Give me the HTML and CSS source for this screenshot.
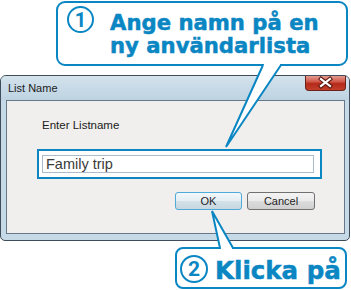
FILE: index.html
```html
<!DOCTYPE html>
<html>
<head>
<meta charset="utf-8">
<link rel="stylesheet" href="styles.css">
</head>
<body>
<div class="page">
  <div class="callout callout-top">
    <span class="num num-top">1</span>
    <div class="callout-text text-top">
      <div class="line">Ange namn på en</div>
      <div class="line">ny användarlista</div>
    </div>
  </div>

  <div class="window">
    <div class="titlebar">
      <span class="title">List Name</span>
      <span class="close">
        <svg width="41" height="15" viewBox="0 0 41 15">
          <path d="M16 4 L25 11 M25 4 L16 11" stroke="#5a1810" stroke-width="4.2" stroke-linecap="square" fill="none"/>
          <path d="M16 4 L25 11 M25 4 L16 11" stroke="#ffffff" stroke-width="2.2" stroke-linecap="square" fill="none"/>
        </svg>
      </span>
    </div>
    <div class="client">
      <div class="label">Enter Listname</div>
      <div class="highlight">
        <div class="input">Family trip</div>
      </div>
      <div class="buttons">
        <div class="btn btn-ok">OK</div>
        <div class="btn btn-cancel">Cancel</div>
      </div>
    </div>
  </div>

  <div class="callout callout-bottom">
    <span class="num num-bottom">2</span>
    <span class="callout-text text-bottom">Klicka på</span>
  </div>

  <svg class="tails" width="351" height="290" viewBox="0 0 351 290">
    <rect x="264" y="63" width="16" height="4" fill="#ffffff"/>
    <polyline points="263,65 226,147 281,65" fill="#ffffff" stroke="#0a86c3" stroke-width="2"/>
    <rect x="221" y="246" width="11" height="4" fill="#ffffff"/>
    <polyline points="220,248 212,211 233,248" fill="#ffffff" stroke="#0a86c3" stroke-width="2"/>
  </svg>
</div>
</body>
</html>
```

FILE: styles.css
```css
html, body {
  margin: 0;
  padding: 0;
  background: #ffffff;
}

.page {
  position: relative;
  width: 351px;
  height: 290px;
  overflow: hidden;
  background: #ffffff;
}

.callout {
  box-sizing: border-box;
  border: 2px solid #0a86c3;
  background: #ffffff;
  display: flex;
  align-items: flex-start;
}

.callout-top {
  margin: 1px 0 0 56px;
  width: 292px;
  height: 65px;
  border-radius: 9px;
  padding: 3px 0 0 9px;
}

.callout-bottom {
  margin: 6px 0 0 175px;
  width: 172px;
  height: 42px;
  border-radius: 8px;
  padding: 0 0 0 3px;
}

.num {
  box-sizing: border-box;
  border: 2px solid #0a86c3;
  border-radius: 50%;
  display: flex;
  align-items: center;
  justify-content: center;
  color: #0a86c3;
  font-family: Roboto, "Liberation Sans", sans-serif;
  font-weight: 700;
  line-height: 1;
  flex: none;
}

.num-top {
  width: 27px;
  height: 27px;
  font-size: 20px;
}

.num-bottom {
  width: 28px;
  height: 28px;
  font-size: 21px;
  margin-top: 6px;
}

.callout-text {
  color: #0a86c3;
  font-family: "DejaVu Sans", sans-serif;
  font-weight: bold;
  white-space: nowrap;
  -webkit-text-stroke: 0.5px #0a86c3;
}

.text-top {
  font-size: 21.2px;
  line-height: 23px;
  margin: 5px 0 0 16px;
}

.line {
  height: 23px;
}

.text-bottom {
  font-size: 24.5px;
  line-height: 28px;
  margin: 8px 0 0 7px;
}

.window {
  margin-top: 9px;
  width: 350px;
  height: 166px;
  box-sizing: border-box;
  border: 1px solid #3f4c5b;
  border-radius: 6px 6px 5px 5px;
  background: #c6d9e6;
  display: flex;
  flex-direction: column;
}

.titlebar {
  height: 24px;
  flex: none;
  display: flex;
  justify-content: space-between;
  align-items: flex-start;
  border-radius: 5px 5px 0 0;
  background: linear-gradient(180deg, #d4e3ec 0%, #c9dbe7 45%, #bed3e1 100%);
}

.title {
  font-family: "Liberation Sans", Arial, sans-serif;
  font-size: 11px;
  line-height: 24px;
  padding-left: 7px;
  color: #1a1a1a;
}

.close {
  width: 41px;
  height: 15px;
  margin-right: 3px;
  box-sizing: border-box;
  border: 1px solid #6a2219;
  border-top: none;
  border-radius: 0 0 4px 4px;
  background: linear-gradient(180deg, #e59a8f 0%, #d0594a 40%, #b42a1a 55%, #c23f2b 100%);
  overflow: hidden;
}

.close svg {
  display: block;
  margin: -1px 0 0 -1px;
}

.client {
  box-sizing: border-box;
  height: 134px;
  margin: 0 4px 0 5px;
  border: 1px solid #66788a;
  background: #f0efed;
  padding: 17px 0 0 30px;
}

.label {
  font-family: "Liberation Sans", Arial, sans-serif;
  font-size: 11.5px;
  line-height: 14px;
  color: #202020;
  margin-left: 5px;
}

.highlight {
  margin-top: 17px;
  width: 285px;
  height: 30px;
  box-sizing: border-box;
  border: 2px solid #0a86c3;
  background: #ffffff;
  padding: 4px 6px 4px 3px;
}

.input {
  box-sizing: border-box;
  height: 18px;
  border: 1px solid #abbdcc;
  padding: 0 3px;
  font-family: "Liberation Sans", Arial, sans-serif;
  font-size: 14.5px;
  line-height: 16px;
  color: #3a3a3a;
}

.buttons {
  margin-top: 13px;
  margin-left: 138px;
  display: flex;
  gap: 5px;
}

.btn {
  box-sizing: border-box;
  height: 18px;
  border: 1px solid #707070;
  border-radius: 3px;
  background: linear-gradient(180deg, #f3f3f3 0%, #ebebeb 48%, #dcdcdc 52%, #cfcfcf 100%);
  font-family: "Liberation Sans", Arial, sans-serif;
  font-size: 11px;
  line-height: 16px;
  color: #1e1e1e;
  text-align: center;
}

.btn-ok {
  width: 67px;
  border-color: #4eaad8;
  background: linear-gradient(180deg, #f2f8fb 0%, #e5eef3 48%, #d3e1e9 52%, #c7d6df 100%);
}

.btn-cancel {
  width: 68px;
}

.tails {
  position: absolute;
  left: 0;
  top: 0;
  pointer-events: none;
}
```
